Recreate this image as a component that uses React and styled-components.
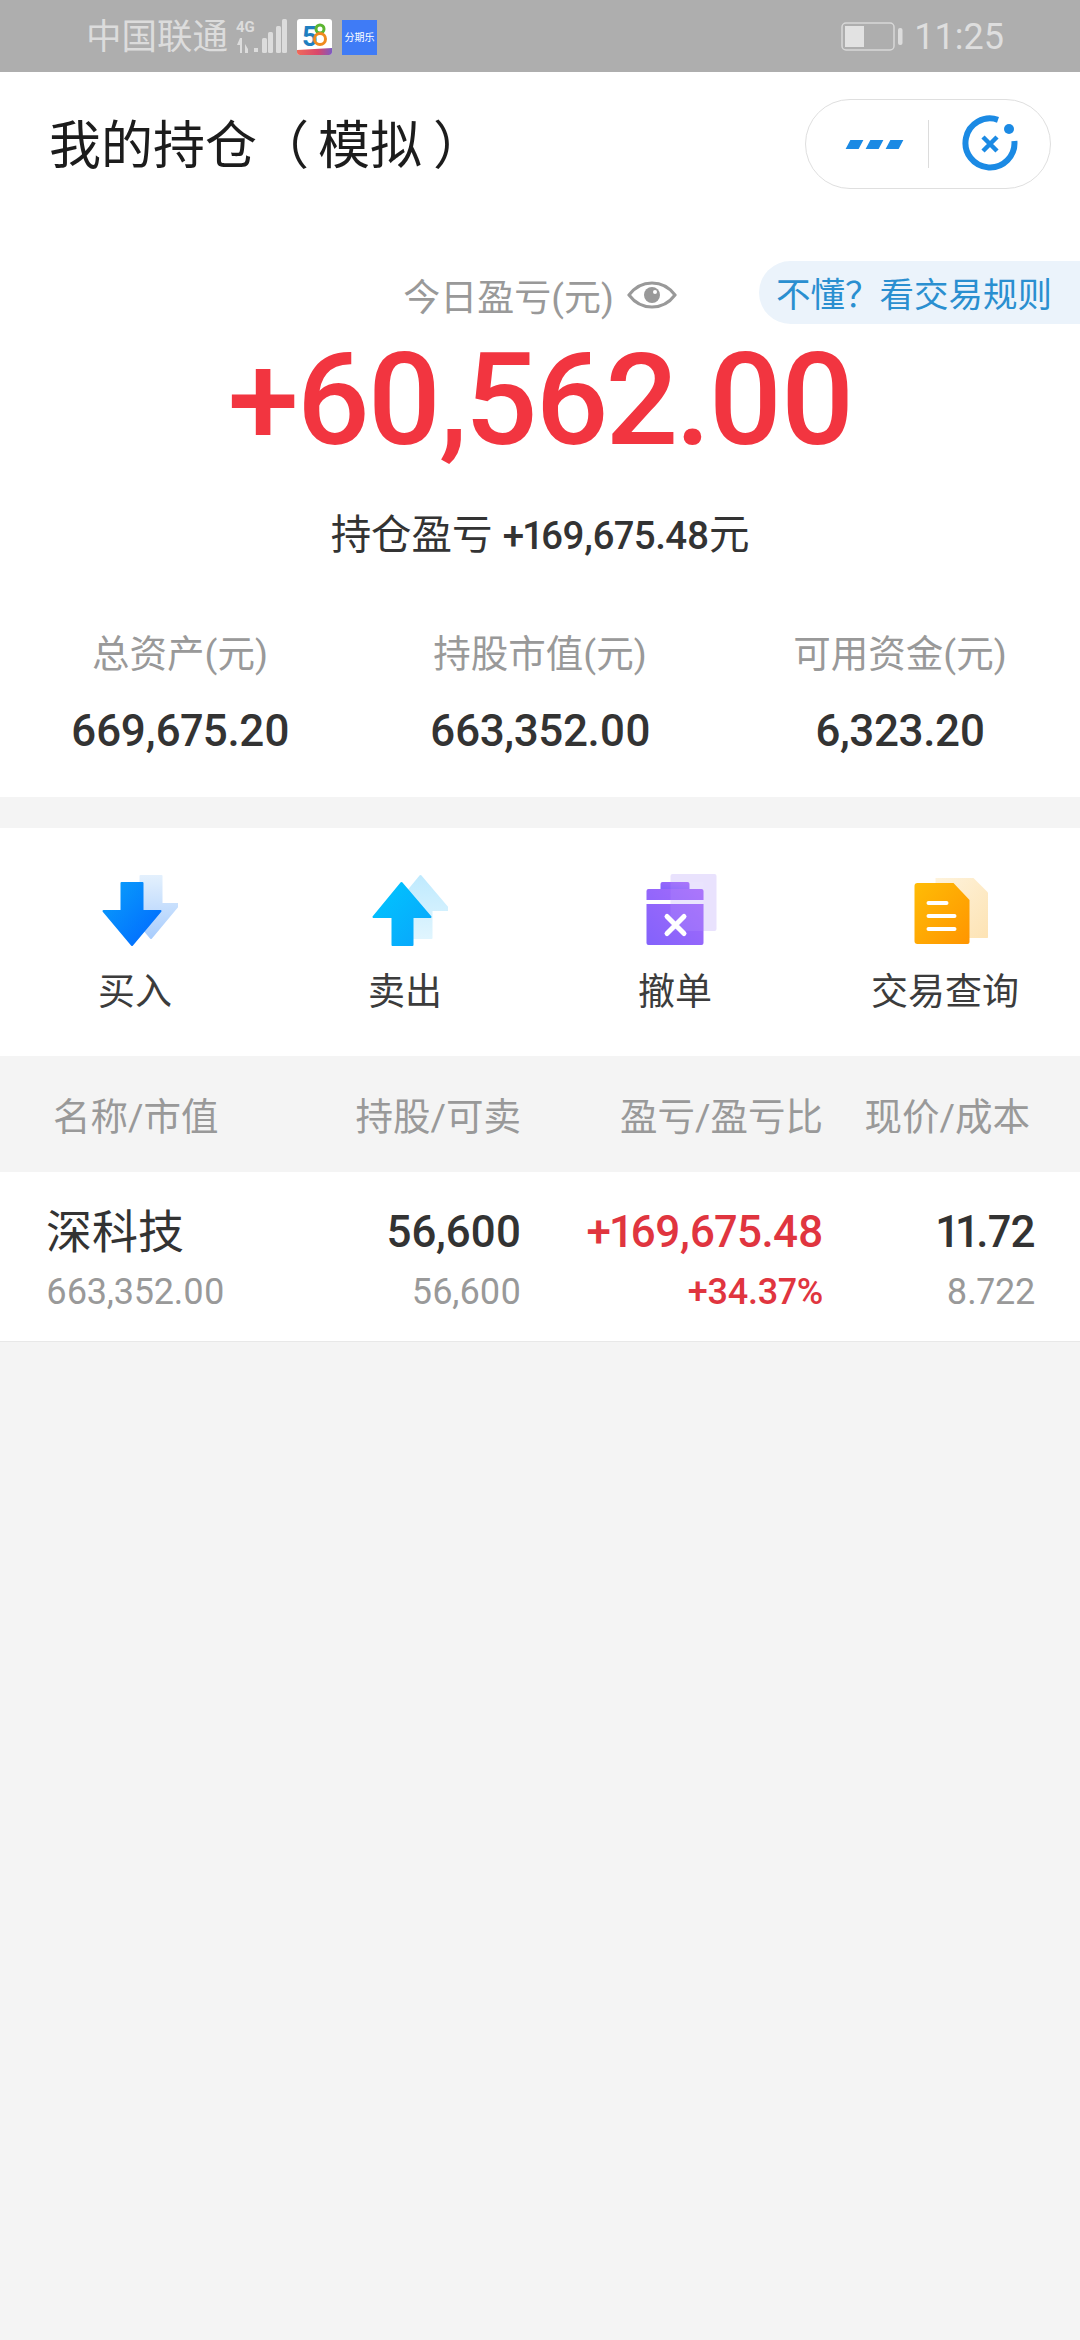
import React from "react";
import styled, { createGlobalStyle } from "styled-components";

const GlobalStyle = createGlobalStyle`
  html, body {
    margin: 0;
    padding: 0;
    background: #f4f4f4;
  }
  * {
    box-sizing: border-box;
  }
  body {
    font-family: Roboto, "Noto Sans CJK SC", sans-serif;
    font-variant-numeric: proportional-nums;
  }
`;

const Page = styled.div`
  width: 1080px;
  min-height: 2340px;
  background: #f4f4f4;
`;

const StatusBar = styled.div`
  height: 72px;
  background: #aeaeae;
  display: flex;
  align-items: center;
  justify-content: space-between;
  padding: 2px 76px 0 86px;
  color: #dcdcdc;
`;

const StatusGroup = styled.div`
  display: flex;
  align-items: center;
`;

const Carrier = styled.span`
  font-size: 35.5px;
  line-height: 40px;
  margin-right: 8px;
`;

const AppBadge = styled.div`
  width: 35px;
  height: 35px;
  margin-left: 10px;
  background: #3f7bf6;
  color: #fff;
  font-size: 10px;
  line-height: 35px;
  text-align: center;
  white-space: nowrap;
  overflow: hidden;
`;

const Clock = styled.span`
  font-size: 36px;
  font-variant-numeric: tabular-nums;
  line-height: 40px;
  margin-left: 10px;
  color: #dedede;
`;

const Header = styled.header`
  height: 144px;
  background: #fff;
  display: flex;
  align-items: center;
  justify-content: space-between;
  padding: 0 29px 0 49px;
`;

const Title = styled.h1`
  margin: 0 0 6px;
  font-size: 52px;
  font-weight: 400;
  color: #1c1c1c;
`;

const OpenParen = styled.span`
  margin-right: 9px;
`;

const CloseParen = styled.span`
  margin-left: 11px;
`;

const Capsule = styled.div`
  width: 246px;
  height: 90px;
  border: 1.5px solid #dfdfdf;
  border-radius: 45px;
  display: flex;
  align-items: center;
`;

const CapsulePart = styled.div`
  width: 50%;
  height: 48px;
  display: flex;
  align-items: center;
  justify-content: center;
  gap: 7px;
  padding-left: ${(p) => p.$inset || 0}px;
  & + & {
    border-left: 1.5px solid #dcdcdc;
  }
`;

const Dash = styled.span`
  width: 13px;
  height: 9px;
  background: #1b8ae4;
  transform: skewX(-28deg);
`;

const Summary = styled.section`
  position: relative;
  background: #fff;
  padding: 56px 0 38px;
`;

const RuleTag = styled.div`
  position: absolute;
  top: 45px;
  right: 0;
  width: 321px;
  height: 63px;
  padding-left: 17px;
  border-radius: 32px 0 0 32px;
  background: #ebf3fb;
  color: #2a8fd0;
  font-size: 34.5px;
  line-height: 69px;
  white-space: nowrap;
`;

const TodayLabel = styled.div`
  display: flex;
  align-items: center;
  justify-content: center;
  gap: 13px;
  height: 50px;
  padding-bottom: 5px;
  color: #999;
  font-size: 37px;
`;

const BigNumber = styled.div`
  margin-top: 8px;
  height: 140px;
  text-align: center;
  color: #f23540;
  font-size: 128px;
  font-weight: 500;
  line-height: 140px;
  letter-spacing: -3px;
`;

const HoldLine = styled.div`
  margin-top: 40px;
  height: 50px;
  text-align: center;
  color: #333;
  font-size: 40.5px;
  line-height: 50px;
`;

const HoldAmount = styled.span`
  font-weight: 500;
  font-size: 38.5px;
  letter-spacing: -0.5px;
`;

const Stats = styled.div`
  margin-top: 69px;
  display: grid;
  grid-template-columns: repeat(3, 1fr);
`;

const Stat = styled.div`
  text-align: center;
`;

const StatLabel = styled.div`
  height: 50px;
  color: #999;
  font-size: 37.5px;
  line-height: 50px;
`;

const StatValue = styled.div`
  margin-top: 24px;
  height: 56px;
  color: #333;
  font-size: 44px;
  font-weight: 500;
  line-height: 56px;
  letter-spacing: -0.4px;
`;

const Actions = styled.nav`
  margin-top: 31px;
  background: #fff;
  padding: 42px 0 38px;
  display: grid;
  grid-template-columns: repeat(4, 270px);
`;

const Action = styled.div`
  display: flex;
  flex-direction: column;
  align-items: center;
  gap: 18px;
`;

const ActionLabel = styled.span`
  height: 50px;
  color: #3c3c3c;
  font-size: 37px;
  line-height: 50px;
`;

const Columns = styled.div`
  display: grid;
  grid-template-columns: 241px 234px 302px 212px;
  padding-left: 46px;
`;

const TableHead = styled(Columns)`
  height: 116px;
  align-items: center;
  padding-bottom: 2px;
  color: #999;
  font-size: 37.5px;
  white-space: nowrap;
`;

const HeadCell = styled.div`
  text-align: ${(p) => (p.$left ? "left" : "right")};
  padding-left: ${(p) => (p.$left ? "7px" : "0")};
  padding-right: ${(p) => p.$inset || 0}px;
`;

const Row = styled(Columns)`
  background: #fff;
  padding-top: 32px;
  padding-bottom: 24px;
  border-bottom: 1px solid #e8e8e8;
`;

const Cell = styled.div`
  text-align: ${(p) => (p.$left ? "left" : "right")};
  white-space: nowrap;
`;

const Main = styled.div`
  height: 56px;
  color: ${(p) => (p.$red ? "#e0353f" : "#333")};
  font-size: ${(p) => (p.$name ? "46px" : "44px")};
  font-weight: ${(p) => (p.$name ? 400 : 500)};
  line-height: 56px;
  letter-spacing: ${(p) => (p.$name ? 0 : "-0.5px")};
`;

const Sub = styled.div`
  margin-top: 7px;
  height: 50px;
  color: ${(p) => (p.$red ? "#e0353f" : "#999")};
  font-size: 36px;
  font-weight: ${(p) => (p.$red ? 500 : 400)};
  line-height: 50px;
  letter-spacing: -0.2px;
`;

const SignalIcon = () => (
  <svg width="52" height="36" viewBox="0 0 52 36" fill="#dcdcdc">
    <text x="0" y="13" fontFamily="Roboto" fontWeight="700" fontSize="15">4G</text>
    <path d="M4 19l-3 7h3v8h2V19zM9 34V25l3 5V34z" />
    <rect x="18" y="29" width="4" height="4" />
    <rect x="26" y="19" width="5" height="15" rx="1.5" />
    <rect x="32" y="13" width="5" height="21" rx="1.5" />
    <rect x="40" y="7" width="5" height="27" rx="1.5" />
    <rect x="46" y="0" width="5" height="34" rx="1.5" />
  </svg>
);

const Logo58 = () => (
  <svg width="35" height="36" viewBox="0 0 35 36" style={{ marginLeft: 9 }}>
    <defs>
      <linearGradient id="bandFill" x1="0" y1="0" x2="1" y2="0">
        <stop offset="0" stopColor="#ef6a5a" />
        <stop offset="0.6" stopColor="#d9476b" />
        <stop offset="1" stopColor="#7c5bc4" />
      </linearGradient>
    </defs>
    <rect width="35" height="36" rx="3" fill="#fff" />
    <text x="5" y="27" fontFamily="Roboto" fontWeight="700" fontSize="27" fill="#1f7fc0">5</text>
    <circle cx="23" cy="10" r="4" fill="none" stroke="#5cb531" strokeWidth="3" />
    <circle cx="23" cy="20" r="5.500" fill="none" stroke="#ef8a1f" strokeWidth="3" />
    <path d="M0 31l35-2v4a3 3 0 0 1-3 3H3a3 3 0 0 1-3-3z" fill="url(#bandFill)" />
  </svg>
);

const BatteryIcon = () => (
  <svg width="63" height="30" viewBox="0 0 63 30">
    <rect x="1" y="1" width="52" height="27" rx="4" fill="none" stroke="#d8d8d8" strokeWidth="1.5" />
    <rect x="4" y="4" width="19" height="21" fill="#e2e2e2" />
    <rect x="57" y="6" width="4.500" height="17" rx="2" fill="#dcdcdc" />
  </svg>
);

const CloseCircleIcon = () => (
  <svg width="60" height="60" viewBox="0 0 60 60" fill="none" stroke="#1b8ae4">
    <path d="M38 5.800A24.500 24.500 0 1 0 54.400 27" strokeWidth="6" />
    <path d="M23 23l14 14M37 23l-14 14" strokeWidth="4.500" />
    <circle cx="49" cy="15" r="5" fill="#1b8ae4" stroke="none" />
  </svg>
);

const EyeIcon = () => (
  <svg width="50" height="28" viewBox="0 0 50 28">
    <path d="M2 14C8 6 16 2 25 2s17 4 23 12c-6 8-14 12-23 12S8 22 2 14z" fill="none" stroke="#999" strokeWidth="3" />
    <circle cx="25" cy="14" r="8" fill="#999" />
    <circle cx="28" cy="11" r="2" fill="#fff" />
  </svg>
);

const DOWN_ARROW = "M21 13h21v28h18L31.500 75 3 41h18z";
const UP_ARROW = "M31 13l29 34H42v28H22V47H3z";

const BuyIcon = () => (
  <svg width="85" height="80" viewBox="-7.500 0 85 80">
    <defs>
      <linearGradient id="buyBack" x1="0.500" y1="0" x2="0.500" y2="1">
        <stop offset="0" stopColor="#e3f0fd" />
        <stop offset="1" stopColor="#a9cdfd" />
      </linearGradient>
      <linearGradient id="buyFront" x1="0" y1="0" x2="1" y2="1">
        <stop offset="0" stopColor="#0aa0fb" />
        <stop offset="1" stopColor="#0066ff" />
      </linearGradient>
    </defs>
    <path d={DOWN_ARROW} transform="translate(19 -7)" fill="url(#buyBack)" stroke="url(#buyBack)" strokeWidth="2" strokeLinejoin="round" />
    <path d={DOWN_ARROW} fill="url(#buyFront)" stroke="url(#buyFront)" strokeWidth="2" strokeLinejoin="round" />
  </svg>
);

const SellIcon = () => (
  <svg width="85" height="80" viewBox="-7.500 0 85 80">
    <defs>
      <linearGradient id="sellBack" x1="0.500" y1="0" x2="0.500" y2="1">
        <stop offset="0" stopColor="#bfeafe" />
        <stop offset="1" stopColor="#e0f5fe" />
      </linearGradient>
      <linearGradient id="sellFront" x1="0" y1="0" x2="1" y2="1">
        <stop offset="0" stopColor="#00c6ff" />
        <stop offset="1" stopColor="#0aa5fb" />
      </linearGradient>
    </defs>
    <path d={UP_ARROW} transform="translate(19 -7)" fill="url(#sellBack)" stroke="url(#sellBack)" strokeWidth="2" strokeLinejoin="round" />
    <path d={UP_ARROW} fill="url(#sellFront)" stroke="url(#sellFront)" strokeWidth="2" strokeLinejoin="round" />
  </svg>
);

const CancelIcon = () => (
  <svg width="85" height="80" viewBox="-7.500 0 85 80">
    <defs>
      <linearGradient id="cancelFront" x1="0" y1="1" x2="1" y2="0">
        <stop offset="0" stopColor="#8362fb" />
        <stop offset="1" stopColor="#a56bfb" />
      </linearGradient>
    </defs>
    <rect x="30" y="4" width="46" height="57" rx="2" fill="#e9e2fd" />
    <path d="M22 12h25a2 2 0 0 1 2 2v5H20v-5a2 2 0 0 1 2-2z" fill="url(#cancelFront)" />
    <path d="M8 19h53a2 2 0 0 1 2 2v9H6v-9a2 2 0 0 1 2-2zM6 34h57v39a2 2 0 0 1-2 2H8a2 2 0 0 1-2-2z" fill="url(#cancelFront)" />
    <rect x="30" y="12" width="33" height="49" fill="#fff" opacity="0.08" />
    <path d="M26.500 46.500l17 17M43.500 46.500l-17 17" stroke="#fff" strokeWidth="5" strokeLinecap="round" />
  </svg>
);

const QueryIcon = () => (
  <svg width="85" height="80" viewBox="-2.500 0 85 80">
    <defs>
      <linearGradient id="queryBack" x1="0" y1="0" x2="1" y2="1">
        <stop offset="0" stopColor="#fef3dc" />
        <stop offset="1" stopColor="#fde3b4" />
      </linearGradient>
      <linearGradient id="queryFront" x1="0" y1="0" x2="1" y2="1">
        <stop offset="0" stopColor="#ffbc06" />
        <stop offset="1" stopColor="#ff9500" />
      </linearGradient>
    </defs>
    <path d="M30 8h38l15 15v43a2 2 0 0 1-2 2H30z" fill="url(#queryBack)" />
    <path d="M12 13h36l16 17v42a2 2 0 0 1-2 2H12a3 3 0 0 1-3-3V16a3 3 0 0 1 3-3z" fill="url(#queryFront)" />
    <g stroke="#fff" strokeWidth="4" strokeLinecap="round">
      <path d="M23 33h18M23 46h26M23 59h26" />
    </g>
  </svg>
);

const stats = [
  { label: "总资产(元)", value: "669,675.20" },
  { label: "持股市值(元)", value: "663,352.00" },
  { label: "可用资金(元)", value: "6,323.20" },
];

const actions = [
  { label: "买入", Icon: BuyIcon },
  { label: "卖出", Icon: SellIcon },
  { label: "撤单", Icon: CancelIcon },
  { label: "交易查询", Icon: QueryIcon },
];

export default function App() {
  return (
    <Page>
      <GlobalStyle />
      <StatusBar>
        <StatusGroup>
          <Carrier>中国联通</Carrier>
          <SignalIcon />
          <Logo58 />
          <AppBadge>分期乐</AppBadge>
        </StatusGroup>
        <StatusGroup>
          <BatteryIcon />
          <Clock>11:25</Clock>
        </StatusGroup>
      </StatusBar>

      <Header>
        <Title>
          我的持仓<OpenParen>（</OpenParen>模拟<CloseParen>）</CloseParen>
        </Title>
        <Capsule>
          <CapsulePart $inset={14}>
            <Dash />
            <Dash />
            <Dash />
          </CapsulePart>
          <CapsulePart>
            <CloseCircleIcon />
          </CapsulePart>
        </Capsule>
      </Header>

      <Summary>
        <RuleTag>不懂？看交易规则</RuleTag>
        <TodayLabel>
          今日盈亏(元)
          <EyeIcon />
        </TodayLabel>
        <BigNumber>+60,562.00</BigNumber>
        <HoldLine>
          持仓盈亏 <HoldAmount>+169,675.48</HoldAmount>元
        </HoldLine>
        <Stats>
          {stats.map((s) => (
            <Stat key={s.label}>
              <StatLabel>{s.label}</StatLabel>
              <StatValue>{s.value}</StatValue>
            </Stat>
          ))}
        </Stats>
      </Summary>

      <Actions>
        {actions.map(({ label, Icon }) => (
          <Action key={label}>
            <Icon />
            <ActionLabel>{label}</ActionLabel>
          </Action>
        ))}
      </Actions>

      <TableHead>
        <HeadCell $left>名称/市值</HeadCell>
        <HeadCell>持股/可卖</HeadCell>
        <HeadCell>盈亏/盈亏比</HeadCell>
        <HeadCell $inset={5}>现价/成本</HeadCell>
      </TableHead>

      <Row>
        <Cell $left>
          <Main $name>深科技</Main>
          <Sub>663,352.00</Sub>
        </Cell>
        <Cell>
          <Main>56,600</Main>
          <Sub>56,600</Sub>
        </Cell>
        <Cell>
          <Main $red>+169,675.48</Main>
          <Sub $red>+34.37%</Sub>
        </Cell>
        <Cell>
          <Main>11.72</Main>
          <Sub>8.722</Sub>
        </Cell>
      </Row>
    </Page>
  );
}
